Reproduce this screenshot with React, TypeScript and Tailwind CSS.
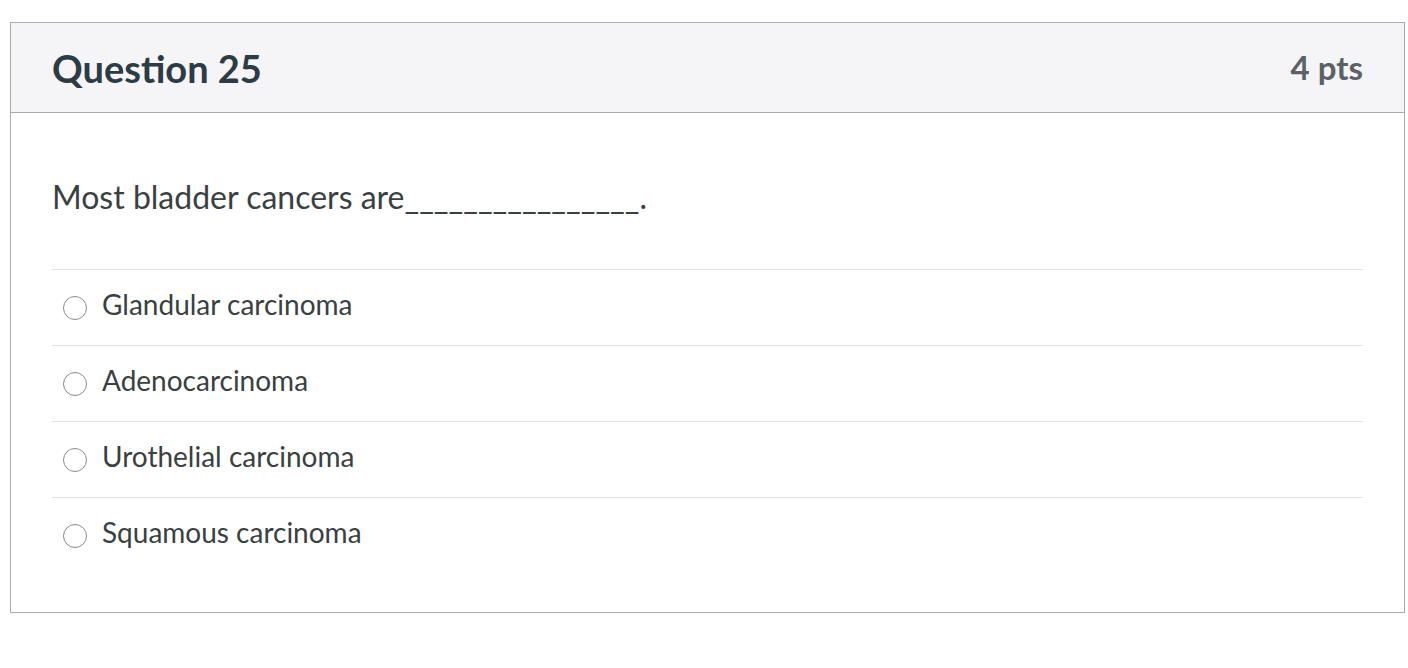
const options = [
  "Glandular carcinoma",
  "Adenocarcinoma",
  "Urothelial carcinoma",
  "Squamous carcinoma",
];

const App = () => {
  return (
    <div className="min-h-screen bg-white pt-[22px] px-[10px] font-['Lato','Liberation_Sans',sans-serif]">
      <div className="w-[1395px] border border-[#aaaaaa] bg-white">
        <div className="h-[90px] flex items-center justify-between px-[41px] bg-[#f5f5f7] border-b border-[#aaaaaa]">
          <h2 className="text-[38px] font-bold text-[#2d3b45] leading-none">Question 25</h2>
          <span className="text-[33px] font-bold text-[#5b6165] leading-none">4 pts</span>
        </div>
        <div className="px-[41px] pt-[65px] pb-[39px]">
          <p className="text-[32px] leading-[38px] text-[#3a3f42] mb-[53px]">
            Most bladder cancers are________________.
          </p>
          <div>
            {options.map((opt) => (
              <label
                key={opt}
                className="h-[76px] flex items-center gap-[15px] pl-[11px] border-t border-[#e2e2e2]"
              >
                <span className="w-[24px] h-[24px] rounded-full border border-[#8a8a8a] bg-white shrink-0" />
                <span className="text-[28px] leading-[32px] text-[#3a3f42] -mt-[7px]">{opt}</span>
              </label>
            ))}
          </div>
        </div>
      </div>
    </div>
  );
};

export default App;
